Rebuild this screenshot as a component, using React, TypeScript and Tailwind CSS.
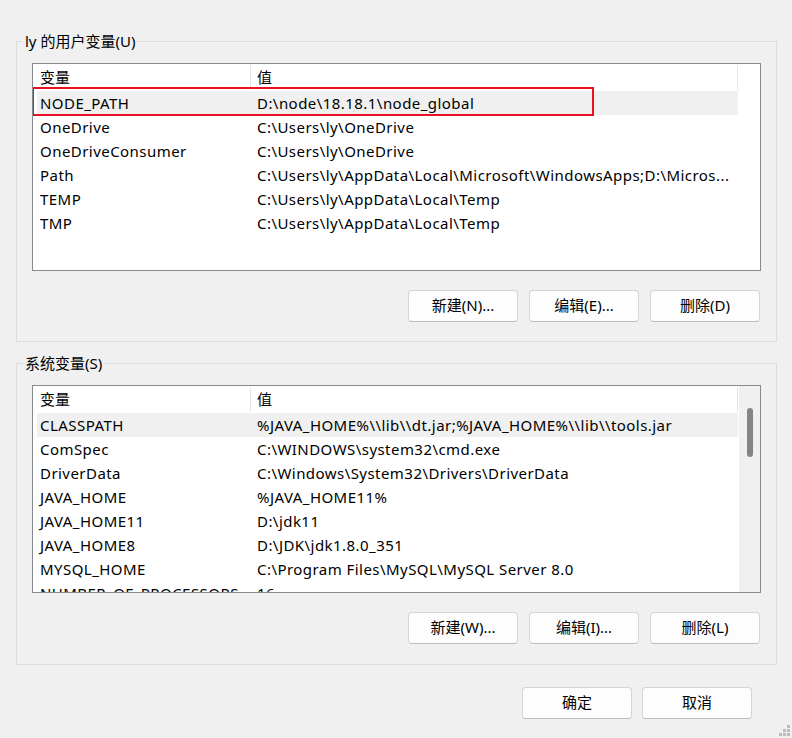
import React from "react";

const FONT = { fontFamily: '"Noto Sans", "Noto Sans CJK SC", sans-serif' };

const userVars: [string, string][] = [
  ["NODE_PATH", String.raw`D:\node\18.18.1\node_global`],
  ["OneDrive", String.raw`C:\Users\ly\OneDrive`],
  ["OneDriveConsumer", String.raw`C:\Users\ly\OneDrive`],
  ["Path", String.raw`C:\Users\ly\AppData\Local\Microsoft\WindowsApps;D:\Micros...`],
  ["TEMP", String.raw`C:\Users\ly\AppData\Local\Temp`],
  ["TMP", String.raw`C:\Users\ly\AppData\Local\Temp`],
];

const sysVars: [string, string][] = [
  ["CLASSPATH", String.raw`%JAVA_HOME%\\lib\\dt.jar;%JAVA_HOME%\\lib\\tools.jar`],
  ["ComSpec", String.raw`C:\WINDOWS\system32\cmd.exe`],
  ["DriverData", String.raw`C:\Windows\System32\Drivers\DriverData`],
  ["JAVA_HOME", "%JAVA_HOME11%"],
  ["JAVA_HOME11", String.raw`D:\jdk11`],
  ["JAVA_HOME8", String.raw`D:\JDK\jdk1.8.0_351`],
  ["MYSQL_HOME", String.raw`C:\Program Files\MySQL\MySQL Server 8.0`],
  ["NUMBER_OF_PROCESSORS", "16"],
];

function Header() {
  return (
    <div className="flex h-[27px] ml-[4px] w-[701px] shrink-0 text-[15px] leading-[27px] text-black">
      <div className="w-[214px] pl-[3px] flex">
        <span className="flex-1">变量</span>
        <span className="w-px my-[1px] bg-[#e5e5e5]" />
      </div>
      <div className="flex-1 pl-[6px] flex">
        <span className="flex-1">值</span>
        <span className="w-px my-[1px] bg-[#e5e5e5]" />
      </div>
    </div>
  );
}

function Row({ name, value, selected }: { name: string; value: string; selected?: boolean }) {
  return (
    <div
      className={
        "flex h-[24px] ml-[4px] w-[701px] shrink-0 text-[15px] leading-[24px] tracking-[0.45px] text-black whitespace-nowrap " +
        (selected ? "bg-[#f0f0f0]" : "")
      }
    >
      <div className="w-[214px] pl-[3px] overflow-hidden">{name}</div>
      <div className="flex-1 pl-[6px] overflow-hidden">{value}</div>
    </div>
  );
}

function Button({ label }: { label: string }) {
  return (
    <button className="w-[110px] h-[32px] rounded-[4px] bg-[#fdfdfd] border border-[#d4d4d4] border-b-[#bcbcbc] text-[15px] leading-[20px] pb-[2px] text-black">
      {label}
    </button>
  );
}

function Group({
  title,
  children,
  pb,
}: {
  title: string;
  children: React.ReactNode;
  pb: string;
}) {
  return (
    <div className={"relative ml-[16px] w-[761px] border border-[#dcdcdc] pt-[21px] px-[15px] " + pb}>
      <span className="absolute -top-[11px] left-[6px] px-[2px] bg-[#f0f0f0] text-[15px] leading-[20px] text-black">
        {title}
      </span>
      {children}
    </div>
  );
}

export default function App() {
  return (
    <div className="relative w-[792px] h-[738px] bg-[#f0f0f0] pt-[41px] overflow-hidden" style={FONT}>
      <Group title="ly 的用户变量(U)" pb="pb-[19px]">
        <div className="relative h-[208px] border border-[#868a91] bg-white flex flex-col overflow-hidden">
          <Header />
          {userVars.map(([n, v], i) => (
            <Row key={n} name={n} value={v} selected={i === 0} />
          ))}
          <div className="absolute -left-px top-[23px] w-[562px] h-[29px] border-2 border-[#e81123]" />
        </div>
        <div className="flex justify-end gap-[11px] mt-[19px] pr-[1px]">
          <Button label="新建(N)..." />
          <Button label="编辑(E)..." />
          <Button label="删除(D)" />
        </div>
      </Group>

      <div className="mt-[21px]">
        <Group title="系统变量(S)" pb="pb-[20px]">
          <div className="h-[208px] border border-[#868a91] bg-white flex overflow-hidden">
            <div className="flex-1 flex flex-col overflow-hidden">
              <Header />
              {sysVars.map(([n, v], i) => (
                <Row key={n} name={n} value={v} selected={i === 0} />
              ))}
            </div>
            <div className="w-[21px] bg-[#f0f0f0] flex justify-center pt-[22px]">
              <div className="w-[6px] h-[49px] rounded-full bg-[#858585]" />
            </div>
          </div>
          <div className="flex justify-end gap-[11px] mt-[19px] pr-[1px]">
            <Button label="新建(W)..." />
            <Button label="编辑(I)..." />
            <Button label="删除(L)" />
          </div>
        </Group>
      </div>

      <div className="flex justify-end gap-[10px] mt-[22px] pr-[40px]">
        <Button label="确定" />
        <Button label="取消" />
      </div>

      <svg className="absolute right-[2px] bottom-[2px]" width="12" height="12" viewBox="0 0 12 12">
        <rect x="9" y="1" width="3" height="3" fill="#bdbdbd" />
        <rect x="5" y="5" width="3" height="3" fill="#bdbdbd" />
        <rect x="9" y="5" width="3" height="3" fill="#bdbdbd" />
        <rect x="1" y="9" width="3" height="3" fill="#bdbdbd" />
        <rect x="5" y="9" width="3" height="3" fill="#bdbdbd" />
        <rect x="9" y="9" width="3" height="3" fill="#bdbdbd" />
      </svg>
    </div>
  );
}
